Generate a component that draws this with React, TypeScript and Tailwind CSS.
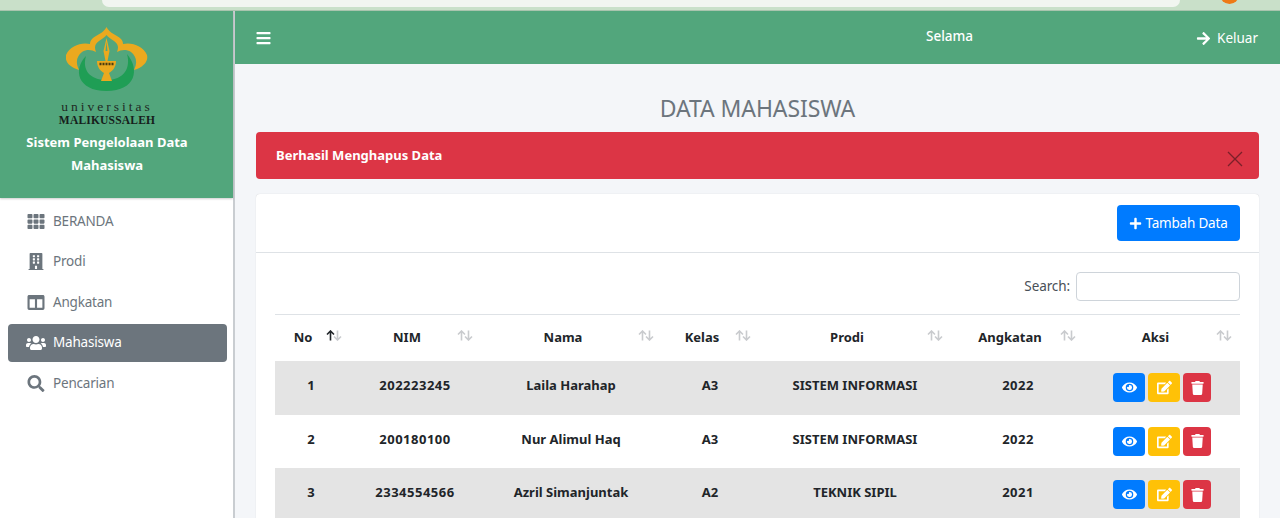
import { FaArrowRight, FaBars, FaBuilding, FaColumns, FaEdit, FaEye, FaPlus, FaSearch, FaTh, FaTrash, FaUsers } from 'react-icons/fa';

const menu = [
  { label: 'BERANDA', icon: FaTh },
  { label: 'Prodi', icon: FaBuilding },
  { label: 'Angkatan', icon: FaColumns },
  { label: 'Mahasiswa', icon: FaUsers, active: true },
  { label: 'Pencarian', icon: FaSearch },
];

const columns = [
  { label: 'No', width: 'w-[72px]', arrow: 'right-[5px]', sorted: true },
  { label: 'NIM', width: 'w-[136px]', arrow: 'right-[10px]' },
  { label: 'Nama', width: 'w-[176px]', arrow: 'right-[5px]' },
  { label: 'Kelas', width: 'w-[102px]', arrow: 'right-[10px]' },
  { label: 'Prodi', width: 'w-[188px]', arrow: 'right-[6px]' },
  { label: 'Angkatan', width: 'w-[138px]', arrow: 'right-[11px]' },
  { label: 'Aksi', width: 'w-[153px]', arrow: 'right-[8px]' },
];

const rows = [
  { no: 1, nim: '202223245', nama: 'Laila Harahap', kelas: 'A3', prodi: 'SISTEM INFORMASI', angkatan: 2022 },
  { no: 2, nim: '200180100', nama: 'Nur Alimul Haq', kelas: 'A3', prodi: 'SISTEM INFORMASI', angkatan: 2022 },
  { no: 3, nim: '2334554566', nama: 'Azril Simanjuntak', kelas: 'A2', prodi: 'TEKNIK SIPIL', angkatan: 2021 },
];

function Logo() {
  return (
    <svg viewBox="0 0 82 64" className="w-[82px] h-[64px]">
      {/* gold dome */}
      <path
        d="M40.5 0C43 6 51 8 55 12C56.5 14 57 15 57 17C66 15 77 19 81 28C82.5 34 78 40 68 43C72 35 70 29 65 25C60 22 55 23 51 25C53 20 52 17 48 14C45 12 42 10 40.5 8C39 10 36 12 33 14C29 17 28 20 30 25C26 23 21 22 16 25C11 29 9 35 13 43C3 40 -1.5 34 0 28C4 19 15 15 24 17C24 15 24.5 14 26 12C30 8 38 6 40.5 0Z"
        fill="#eba91f"
      />
      {/* crescent */}
      <path d="M20 29C7 42 11 64 40.5 64C70 64 74 42 61 27C65 41 58 53 40.5 53C23 53 16 42 20 29Z" fill="#1f9e55" />
      {/* lamp */}
      <path d="M40.5 11L43.5 24L41.5 34H50C50 41 46 44 43 46L46 54H35L38 46C35 44 31 41 31 34H39.5L37.5 24Z" fill="#eba91f" />
      <path d="M40.5 15L41.5 24H39.5Z" fill="#52a67c" />
      <path d="M33.5 37h14" stroke="#4a3c10" strokeWidth="2.6" strokeDasharray="2 1" />
    </svg>
  );
}

function SortArrows({ active, position }: { active?: boolean; position: string }) {
  return (
    <svg viewBox="0 0 16 11" className={`absolute ${position} top-[15px] w-[16px] h-[11px]`} fill="none" strokeWidth="1.6">
      <path d="M4.5 10.5V1M1 4.5L4.5 1L8 4.5" stroke={active ? '#212529' : '#c9cbce'} />
      <path d="M11.5 0.5V10M8 6.5L11.5 10L15 6.5" stroke="#c9cbce" />
    </svg>
  );
}

function ActionButtons() {
  return (
    <div className="flex justify-center gap-[3px] pr-[3px]">
      <button className="w-[32px] h-[29px] rounded-[4px] bg-[#007bff] text-white flex items-center justify-center">
        <FaEye className="w-[15px] h-[15px]" />
      </button>
      <button className="w-[32px] h-[29px] rounded-[4px] bg-[#ffc107] text-white flex items-center justify-center">
        <FaEdit className="w-[15px] h-[15px]" />
      </button>
      <button className="w-[28px] h-[29px] rounded-[4px] bg-[#dc3545] text-white flex items-center justify-center">
        <FaTrash className="w-[13px] h-[14px]" />
      </button>
    </div>
  );
}

export default function App() {
  return (
    <div className="h-[518px] w-[1280px] overflow-hidden flex flex-col bg-[#f4f6f9] font-['Noto_Sans',sans-serif] text-[#212529]">
      {/* browser strip */}
      <div className="h-[11px] shrink-0 bg-[#c9e0c9] border-b border-[#a9c4ae] relative overflow-hidden">
        <div className="h-[7px] ml-[102px] w-[1078px] bg-[#f1f5f0] rounded-b-[10px]" />
        <div className="absolute left-[1220px] -top-[15px] w-[19px] h-[19px] rounded-full bg-[#ee7a16]" />
      </div>

      <div className="flex flex-1 min-h-0">
        {/* Sidebar */}
        <aside className="w-[235px] shrink-0 bg-white border-r-[2px] border-[#c9cdd1] flex flex-col">
          <div className="h-[187px] bg-[#52a67c] flex flex-col items-center pt-[16px] pr-[19px] shadow-[0_1px_2px_rgba(0,0,0,0.2)]">
            <Logo />
            <p className="mt-[9px] font-['Liberation_Serif',serif] text-[13.5px] leading-[14px] tracking-[3px] text-[#1f2a24]">universitas</p>
            <p className="font-['Liberation_Serif',serif] font-bold text-[11.5px] leading-[12px] tracking-[0.2px] text-[#16201b]">MALIKUSSALEH</p>
            <p className="mt-[5px] w-[200px] text-center text-white font-bold text-[13px] leading-[23px]">
              Sistem Pengelolaan Data Mahasiswa
            </p>
          </div>
          <nav className="pt-[4px] pl-[8px] pr-[6px] flex flex-col gap-[2.5px]">
            {menu.map((item) => (
              <div
                key={item.label}
                className={`h-[38px] rounded-[4px] flex items-center pl-[19px] text-[13.5px] tracking-[-0.2px] ${
                  item.active ? 'bg-[#6c757d] text-white' : 'text-[#6c757d]'
                }`}
              >
                <span className="w-[26px] flex justify-start">
                  <item.icon className={item.active ? 'w-[22px] h-[16px] -ml-[2px]' : 'w-[18px] h-[17px]'} />
                </span>
                {item.label}
              </div>
            ))}
          </nav>
        </aside>

        {/* Main */}
        <main className="flex-1 min-w-0 flex flex-col">
          <header className="h-[53px] shrink-0 bg-[#52a67c] flex items-center text-white text-[13.5px] relative pl-[21px] pr-[22px]">
            <FaBars className="w-[15px] h-[16px]" />
            <span className="ml-[655px] -mt-[3px] font-medium">Selama</span>
            <span className="ml-auto flex items-center gap-[6px] mt-[1px]">
              <FaArrowRight className="w-[15px] h-[15px]" />
              Keluar
            </span>
          </header>

          <div className="px-[21px]">
            <h1 className="text-center text-[23px] leading-[30px] text-[#6c757d] mt-[29px] tracking-[-0.1px]">DATA MAHASISWA</h1>

            <div className="mt-[9px] h-[47px] rounded-[4px] bg-[#dc3545] text-white font-bold text-[13px] flex items-center pl-[20px] relative">
              <span className="mt-[1px]">Berhasil Menghapus Data</span>
              <svg viewBox="0 0 16 16" className="absolute right-[16px] top-[19px] w-[16px] h-[16px]" fill="none" stroke="#7a2029" strokeWidth="1.3">
                <path d="M1 1l14 14M15 1L1 15" />
              </svg>
            </div>

            <section className="mt-[15px] bg-white rounded-[4px] shadow-[0_0_1px_rgba(0,0,0,0.2)] h-[400px]">
              <div className="h-[59px] border-b border-[#dee2e6] flex items-center justify-end pr-[19px]">
                <button className="h-[36px] w-[123px] rounded-[4px] bg-[#007bff] text-white text-[13.5px] flex items-center justify-center gap-[3px] tracking-[-0.2px]">
                  <FaPlus className="w-[13px] h-[13px]" />
                  Tambah Data
                </button>
              </div>

              <div className="px-[19px]">
                <div className="h-[61px] flex items-start pt-[19px] justify-end gap-[6px] text-[13.5px] text-[#495057] tracking-[-0.1px]">
                  <span className="leading-[29px]">Search:</span>
                  <input className="w-[164px] h-[29px] border border-[#ced4da] rounded-[4px] bg-white" />
                </div>

                <table className="w-[965px] table-fixed border-collapse text-[13px] font-bold">
                  <thead>
                    <tr className="h-[46px] border-t border-[#dee2e6]">
                      {columns.map((col) => (
                        <th key={col.label} className={`${col.width} relative text-center font-bold pr-[16px]`}>
                          {col.label}
                          <SortArrows active={col.sorted} position={col.arrow} />
                        </th>
                      ))}
                    </tr>
                  </thead>
                  <tbody className="text-center">
                    {rows.map((row, i) => (
                      <tr key={row.no} className={`${i === 1 ? 'h-[53px] bg-white' : 'h-[54px] bg-[#e4e4e4]'}`}>
                        <td className="pb-[3px]">{row.no}</td>
                        <td className="pb-[3px] tracking-[0.5px]">{row.nim}</td>
                        <td className="pb-[3px]">{row.nama}</td>
                        <td className="pb-[3px]">{row.kelas}</td>
                        <td className="pb-[3px]">{row.prodi}</td>
                        <td className="pb-[3px] tracking-[0.5px]">{row.angkatan}</td>
                        <td><ActionButtons /></td>
                      </tr>
                    ))}
                  </tbody>
                </table>
              </div>
            </section>
          </div>
        </main>
      </div>
    </div>
  );
}
